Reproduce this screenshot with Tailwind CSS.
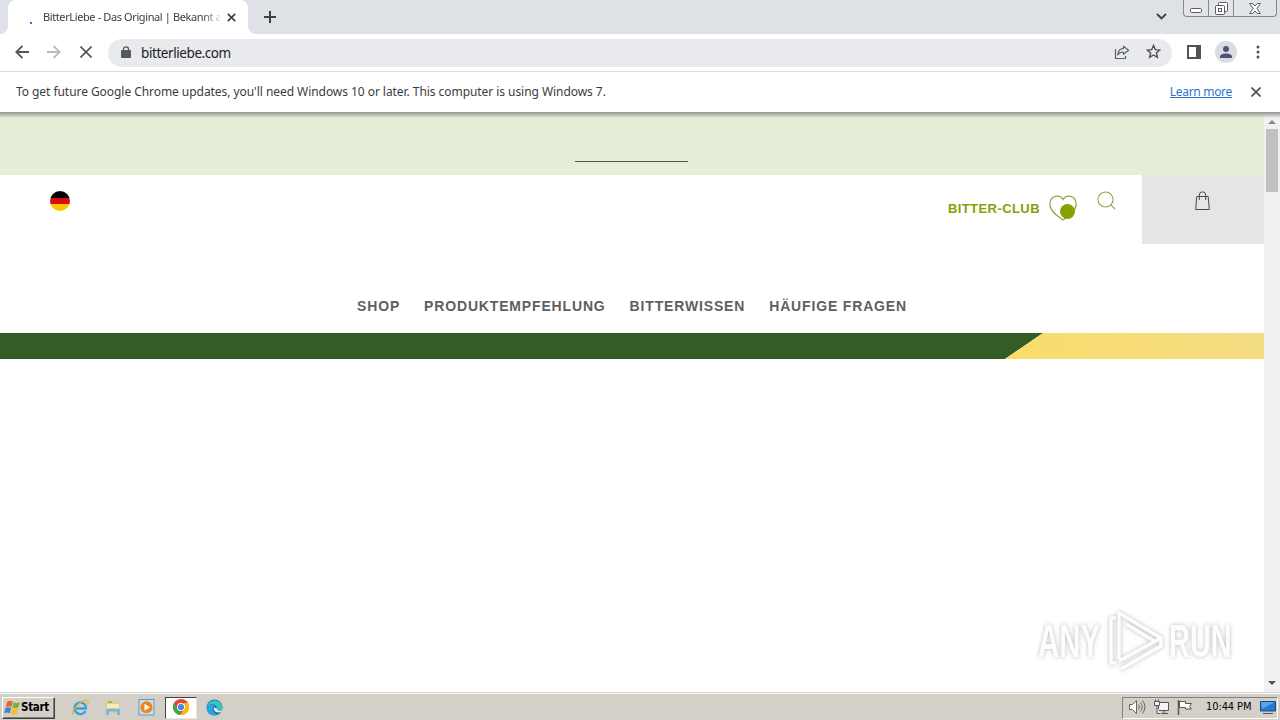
<!DOCTYPE html>
<html lang="de">
<head>
    <meta charset="UTF-8">
    <meta name="viewport" content="width=device-width, initial-scale=1.0">
    <title>BitterLiebe - Das Original</title>
    <script src="https://cdn.jsdelivr.net/npm/@tailwindcss/browser@4"></script>
</head>
<body class="w-[1280px] h-[720px] overflow-hidden bg-white flex flex-col font-['DejaVu_Sans_Condensed','DejaVu_Sans',sans-serif]">

    <!-- Tab Strip -->
    <div class="h-[34px] shrink-0 bg-[#dee1e6] flex items-end">
        <div class="w-2 h-2 bg-white">
            <div class="w-2 h-2 bg-[#dee1e6] rounded-br-lg"></div>
        </div>
        <div class="w-60 h-[34px] bg-white rounded-t-lg flex items-center pl-[22px] pr-2.5">
            <span class="w-0.5 h-0.5 mt-3 bg-[#3a6bd0]"></span>
            <span class="ml-[11px] w-[177px] whitespace-nowrap text-[11px] tracking-[-0.39px] font-['Noto_Sans',sans-serif] text-[#3c4043] [mask-image:linear-gradient(to_right,black_90%,transparent_102%)]">BitterLiebe - Das Original | Bekannt a</span>
            <svg class="ml-[7px] w-[9px] h-[9px] shrink-0" viewBox="0 0 9 9" fill="none" stroke="#3c4043" stroke-width="1.7">
                <path d="M.8.8l7.4 7.4M8.2.8L.8 8.2"></path>
            </svg>
        </div>
        <div class="w-2 h-2 bg-white">
            <div class="w-2 h-2 bg-[#dee1e6] rounded-bl-lg"></div>
        </div>
        <svg class="ml-2 mb-[11px] w-3 h-3" viewBox="0 0 12 12" fill="none" stroke="#3c4043" stroke-width="2">
            <path d="M6 0v12M0 6h12"></path>
        </svg>
        <svg class="ml-auto mb-[14px] w-[11px] h-[7px]" viewBox="0 0 11 7" fill="none" stroke="#3c4043" stroke-width="1.8">
            <path d="M1 1l4.5 4.5L10 1"></path>
        </svg>
        <!-- Window buttons -->
        <div class="self-start ml-4 mr-[3px] w-[94px] h-[17px] border border-t-0 border-[#85888f] rounded-b-[4px] flex bg-[#e2e4e9]">
            <div class="w-[25px] border-r border-[#85888f] flex justify-center">
                <svg class="mt-2 w-3 h-[5px]" viewBox="0 0 12 5" fill="#fff" stroke="#555a66">
                    <rect x=".5" y=".5" width="11" height="4" rx="1"></rect>
                </svg>
            </div>
            <div class="w-[25px] border-r border-[#85888f] flex justify-center">
                <svg class="mt-0.5 w-[13px] h-[13px]" viewBox="0 0 13 13" fill="#fff" stroke="#555a66">
                    <rect x="3.5" y=".5" width="9" height="9" rx="1"></rect>
                    <rect x=".5" y="3.5" width="9" height="9" rx="1"></rect>
                    <rect x="3.5" y="6.5" width="3" height="3"></rect>
                </svg>
            </div>
            <div class="flex-1 flex justify-center">
                <svg class="mt-[3px] w-3 h-[11px]" viewBox="0 0 12 11" fill="#fff" stroke="#555a66">
                    <path d="M.7.5h3L6 3 8.3.5h3L8 5.5l3.3 5h-3L6 8l-2.3 2.5h-3L4 5.5z"></path>
                </svg>
            </div>
        </div>
    </div>

    <!-- Toolbar -->
    <div class="h-[38px] shrink-0 bg-white border-b border-[#d9dce0] flex items-center pl-[15px] pr-[14px]">
        <svg class="mb-0.5 w-3.5 h-3.5" viewBox="0 0 14 14" fill="none" stroke="#505357" stroke-width="1.8">
            <path d="M14 7H1.5M7.5.8L1.3 7l6.2 6.2"></path>
        </svg>
        <svg class="mb-0.5 ml-[18px] w-3.5 h-3.5" viewBox="0 0 14 14" fill="none" stroke="#b8babd" stroke-width="1.8">
            <path d="M0 7h12.5M6.5.8L12.7 7l-6.2 6.2"></path>
        </svg>
        <svg class="mb-0.5 ml-[19px] w-3 h-3" viewBox="0 0 12 12" fill="none" stroke="#505357" stroke-width="1.6">
            <path d="M.5.5l11 11M11.5.5l-11 11"></path>
        </svg>
        <div class="ml-4 w-[1064px] h-7 rounded-full bg-[#e8eaed] flex items-center pl-[13px] pr-[11px]">
            <svg class="mb-0.5 w-[10px] h-3" viewBox="0 0 10 12">
                <rect x="0" y="4" width="10" height="8" rx="1" fill="#55585c"></rect>
                <path d="M2.5 5V3a2.5 2.2 0 015 0v2" fill="none" stroke="#55585c" stroke-width="1.3"></path>
            </svg>
            <span class="ml-[10px] text-[13.5px] leading-7 tracking-[-0.42px] font-['Noto_Sans',sans-serif] text-[#202124]">bitterliebe.com</span>
            <svg class="ml-auto w-4 h-[15px]" viewBox="0 0 16 15" fill="none" stroke="#606367" stroke-width="1.2">
                <path d="M1.500 4v9.500h10V11"></path>
                <path d="M9.500 1.200L14.600 5.200 9.500 9.300V7C6.500 7 5 8 3.700 10 4 6.300 6 3.800 9.500 3.400z" stroke-linejoin="round"></path>
            </svg>
            <svg class="mb-0.5 ml-4 w-[15px] h-[15px]" viewBox="0 0 15 15" fill="none" stroke="#505357" stroke-width="1.4">
                <path d="M7.500 1.500l1.800 4.100 4.400.4-3.300 2.900 1 4.400-3.900-2.300-3.900 2.300 1-4.400L1.300 6l4.400-.4z"></path>
            </svg>
        </div>
        <svg class="mb-0.5 ml-[15px] w-3.5 h-3.5" viewBox="0 0 14 14">
            <rect x="1" y="1" width="12" height="12" fill="none" stroke="#505357" stroke-width="2"></rect>
            <path d="M9 1h5v12H9z" fill="#505357"></path>
        </svg>
        <svg class="mb-0.5 ml-3.5 w-[22px] h-[22px]" viewBox="0 0 22 22">
            <circle cx="11" cy="11" r="11" fill="#dadde3"></circle>
            <circle cx="11" cy="8" r="3" fill="#4c5672"></circle>
            <path d="M5 17v-1.500c0-2 3-3 6-3s6 1 6 3V17z" fill="#4c5672"></path>
        </svg>
        <svg class="mb-0.5 ml-auto mr-[6px] w-1 h-[14px]" viewBox="0 0 4 14" fill="#505357">
            <circle cx="2" cy="2" r="1.500"></circle>
            <circle cx="2" cy="7" r="1.500"></circle>
            <circle cx="2" cy="12" r="1.500"></circle>
        </svg>
    </div>

    <!-- Infobar -->
    <div class="h-10 shrink-0 bg-white flex items-center pl-4 pr-[19px] text-xs font-['Noto_Sans',sans-serif] text-[#3a3c3f]">
        <span class="whitespace-nowrap tracking-[-0.055px]">To get future Google Chrome updates, you'll need Windows 10 or later. This computer is using Windows 7.</span>
        <span class="ml-auto text-[#2a75cf] underline whitespace-nowrap tracking-[-0.3px]">Learn more</span>
        <svg class="ml-[19px] w-[10px] h-[10px]" viewBox="0 0 9 9" fill="none" stroke="#505357" stroke-width="1.6">
            <path d="M.5.5l8 8M8.500.5l-8 8"></path>
        </svg>
    </div>

    <!-- Page -->
    <div class="h-[580px] shrink-0 flex relative">
        <div class="absolute inset-x-0 top-0 h-1.5 bg-linear-to-b from-[#8f948b] to-transparent"></div>
        <div class="w-[1264px] flex flex-col font-['Liberation_Sans',Arial,sans-serif]">
            <div class="h-[63px] bg-[#e5eed6] flex justify-center items-end pb-[13px]">
                <div class="mr-px w-[113px] h-px bg-[#4c564a]"></div>
            </div>

            <div class="h-[69px] flex items-start">
                <svg class="ml-[50px] mt-4 w-5 h-5 rounded-full" viewBox="0 0 20 20">
                    <path d="M0 0h20v7H0z" fill="#000"></path>
                    <path d="M0 7h20v6H0z" fill="#d80a12"></path>
                    <path d="M0 13h20v7H0z" fill="#ffc400"></path>
                </svg>
                <span class="ml-auto mt-6 text-[13px] leading-5 font-bold tracking-[0.43px] text-[#8a9e06]">BITTER-CLUB</span>
                <svg class="ml-[9px] mt-5 w-7 h-[26px]" viewBox="0 0 28 26" fill="none">
                    <path d="M14 4.500C11-.5 1-.5 .9 9.500.9 16 8 21 14 25c6-4 13.100-9 13.100-15.500C27-.5 17-.5 14 4.500z" stroke="#93a446" stroke-width="1.200"></path>
                    <circle cx="18.500" cy="16.500" r="7.500" fill="#8aa000"></circle>
                </svg>
                <svg class="ml-5 mt-4 w-[19px] h-[19px]" viewBox="0 0 19 19" fill="none" stroke="#93a446" stroke-width="1.100">
                    <circle cx="8.500" cy="8.500" r="7.500"></circle>
                    <path d="M13.800 13.800l4.400 4.400"></path>
                </svg>
                <div class="ml-[26px] w-[122px] h-[69px] bg-[#e5e5e5] flex justify-center">
                    <svg class="mt-4 mr-px w-[15px] h-[19px]" viewBox="0 0 15 19" fill="none" stroke="#4a4a4a">
                        <path d="M1.800 5.500h11.400l1.100 13H.7z"></path>
                        <path d="M4.300 9V4a3.200 3.200 0 016.400 0v5"></path>
                    </svg>
                </div>
            </div>

            <div class="h-[89px] flex justify-center gap-6 pt-[52px] text-sm leading-5 font-bold tracking-[0.84px] text-[#5f5f5f]">
                <span>SHOP</span>
                <span>PRODUKTEMPFEHLUNG</span>
                <span>BITTERWISSEN</span>
                <span>HÄUFIGE FRAGEN</span>
            </div>

            <svg class="w-[1264px] h-[26px]" viewBox="0 0 1264 26">
                <defs>
                    <linearGradient id="banner">
                        <stop offset="0" stop-color="#fadc6c"></stop>
                        <stop offset="1" stop-color="#f4dc82"></stop>
                    </linearGradient>
                </defs>
                <path d="M0 0h1043l-38 26H0z" fill="#335d24"></path>
                <path d="M1043 0h221v26h-259z" fill="url(#banner)"></path>
            </svg>
        </div>

        <!-- Scrollbar -->
        <div class="w-4 bg-[#f1f1f1] flex flex-col items-center">
            <svg class="mt-2 w-2 h-1" viewBox="0 0 8 4" fill="#8a8a8a"><path d="M0 4l4-4 4 4z"></path></svg>
            <div class="mt-[5px] w-3 h-[63px] bg-[#c1c1c1]"></div>
            <svg class="mt-auto mb-[7px] w-2 h-1" viewBox="0 0 8 4" fill="#505050"><path d="M0 0l4 4 4-4z"></path></svg>
        </div>

        <!-- Watermark -->
        <div class="absolute left-[1038px] top-[497px] flex items-center drop-shadow-[0_0_2px_#bbbbbb] font-['Liberation_Sans',Arial,sans-serif] text-[46px] font-bold leading-[64px] text-[#fdfdfd]">
            <span class="w-[65px] origin-left scale-x-[.64] whitespace-nowrap">ANY</span>
            <svg class="ml-1 w-[58px] h-[64px]" viewBox="0 0 58 64" fill="none" stroke="#fdfdfd" stroke-width="3.500" stroke-linejoin="round">
                <path d="M12 50V4l42 25-42 23"></path>
                <path d="M19 15l28 17"></path>
                <path d="M9 9H4v45h5"></path>
                <path d="M14 60l40-23v-8"></path>
            </svg>
            <span class="ml-1 w-[63px] origin-left scale-x-[.63] whitespace-nowrap">RUN</span>
        </div>
    </div>

    <!-- Taskbar -->
    <div class="h-7 shrink-0 bg-[#d4d0c8] border-t border-[#d4d0c8] flex items-center shadow-[inset_0_1px_0_white] pl-0.5">
        <div class="mt-0.5 w-[53px] h-[22px] border border-t-white border-l-white border-r-[#404040] border-b-[#404040] shadow-[inset_-1px_-1px_0_#808080] flex items-center pl-[1px]">
            <svg class="w-[17px] h-[17px] shrink-0" viewBox="0 0 16 16">
                <path d="M3 2.500Q5.500.8 8 2.500L7 7.500Q4.500 6 1.800 7.500z" fill="#e8622c"></path>
                <path d="M8.800 3Q11.500 4.500 15 3L13.500 8Q11 9.500 7.800 8z" fill="#77b043"></path>
                <path d="M1.500 8.500Q4 7 6.700 8.500L5.500 13.500Q3 12 0 13.500z" fill="#3d86c9"></path>
                <path d="M7.500 9Q10 10.500 13.200 9L12 14Q9 15.500 6.300 14z" fill="#f4bd29"></path>
            </svg>
            <span class="text-[11.5px] font-bold tracking-[-0.3px] text-black">Start</span>
        </div>
        <!-- Internet Explorer -->
        <svg class="ml-4 mt-0.5 w-[18px] h-[18px]" viewBox="0 0 18 18" fill="none">
            <path d="M14.500 12A5.800 5.800 0 119.300 3.500c3.500 0 5.700 2.700 5.500 6H5" stroke="#35a3df" stroke-width="2.500"></path>
            <path d="M2 16C-1 12 12-1 16.500 2c1 .8.500 2.500-.5 4" stroke="#e8b62c" stroke-width="1.200"></path>
        </svg>
        <!-- Explorer -->
        <svg class="ml-[15px] mt-0.5 w-[18px] h-[18px]" viewBox="0 0 18 18">
            <path d="M2 2h6l1 2h6v10H2z" fill="#e9ce6b"></path>
            <path d="M3 5h12v5H3z" fill="#f9edb0"></path>
            <path d="M4 3h4" stroke="#4aa84d"></path>
            <path d="M2 16v-5q0-1.500 1.500-1.500h11Q16 9.500 16 11v5h-3v-3.500H5V16z" fill="#75b9dd"></path>
        </svg>
        <!-- Media Player -->
        <svg class="ml-4 mt-0.5 w-[17px] h-[17px]" viewBox="0 0 17 17">
            <rect x="1" y=".5" width="15" height="15.500" fill="#c6dff0" stroke="#6299c4"></rect>
            <circle cx="8.500" cy="8.300" r="6" fill="#f08418"></circle>
            <path d="M6.500 4.800l5.500 3.500-5.500 3.500z" fill="#fff"></path>
        </svg>
        <!-- Chrome -->
        <div class="ml-[10px] mt-0.5 w-8 h-[22px] bg-white border border-t-[#404040] border-l-[#404040] border-r-[#e8e6e0] border-b-[#e8e6e0] flex items-center justify-center">
            <svg class="mb-0.5 w-4 h-4" viewBox="0 0 16 16">
                <circle cx="8" cy="8" r="8" fill="#ea4335"></circle>
                <path d="M1.070 4L4.540 10 8 12l-1 3.940A8 8 0 011.070 4z" fill="#34a853"></path>
                <path d="M14.930 4A8 8 0 017 15.940L11.460 10 11 4z" fill="#fbbc05"></path>
                <circle cx="8" cy="8" r="4" fill="#fff"></circle>
                <circle cx="8" cy="8" r="3.100" fill="#4285f4"></circle>
            </svg>
        </div>
        <!-- Edge -->
        <svg class="ml-[9px] mt-0.5 w-[17px] h-[17px]" viewBox="0 0 17 17">
            <circle cx="8.500" cy="8.500" r="8" fill="#1477c9"></circle>
            <path d="M.7 8A8 8 0 0116.500 8.500c0 2-1.500 3-3.500 3s-2.500-1-2-2C11.500 6 4 3 .7 8z" fill="#3ac6b2"></path>
            <path d="M.7 8C3 4.500 7 5 8.500 7c-3 1-2.500 7 3 8.500C6 18 0 14 .7 8z" fill="#2aa5e0"></path>
            <path d="M8 8.500c-1 3 2 6 7 4.500l1.500-2c-2 1.200-6 1.200-5.500-1.500z" fill="#e3f1f5"></path>
        </svg>

        <!-- Tray -->
        <div class="ml-auto mt-0.5 mr-0.5 w-[156px] h-[22px] border border-t-[#808080] border-l-[#808080] border-r-white border-b-white flex items-center pl-[6px]">
            <svg class="mb-0.5 w-[17px] h-4" viewBox="0 0 17 16" fill="#fff" stroke="#666">
                <path d="M.5 5.500h3l4-4v13l-4-4h-3z"></path>
                <path d="M9.500 5.500q2 2.500 0 5M11.500 3.500q3.500 4.500 0 9M13.500 1.500q5 6.500 0 13" fill="none"></path>
            </svg>
            <svg class="mb-0.5 ml-[7px] w-[17px] h-4" viewBox="0 0 17 16" fill="#f4f4f4" stroke="#555">
                <path d="M5.500 3.500h10v8h-10zM8 14.500h7M11 11.500v3"></path>
                <path d="M1.500 2.500h5v4h-5zM2.500.5v2M5.500.5v2M4 6.500v8h3"></path>
            </svg>
            <svg class="mb-0.5 ml-[7px] w-4 h-4" viewBox="0 0 16 16" fill="#fff" stroke="#555">
                <path d="M1.500 1v15" stroke-width="1.500"></path>
                <path d="M2.500 2.500h6v2h6l-2 3 2 2.500h-6V8.500h-6z"></path>
            </svg>
            <span class="ml-[13px] w-[46px] whitespace-nowrap text-[11px] tracking-[-0.1px] text-black">10:44 PM</span>
            <svg class="ml-[8px] w-4 h-[15px] shrink-0" viewBox="0 0 16 15">
                <path d="M.5 1.500h15v9.500H.5z" fill="#2777d0" stroke="#174a93"></path>
                <path d="M1 2h14L2 9z" fill="#5ba6e7"></path>
                <path d="M3 13.500h10" stroke="#555"></path>
            </svg>
        </div>
    </div>
</body>
</html>
